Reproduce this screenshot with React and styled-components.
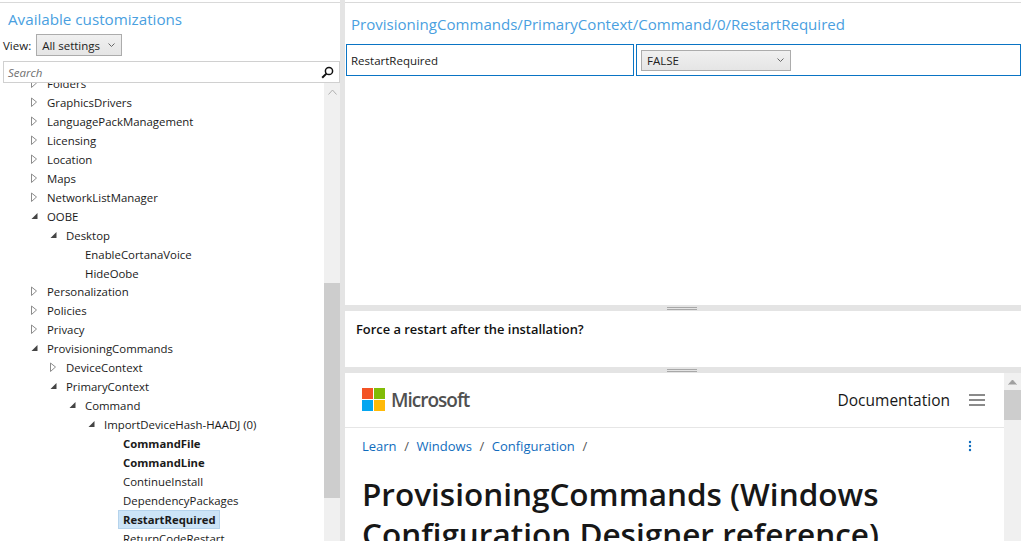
import styled, { createGlobalStyle } from "styled-components";

const Global = createGlobalStyle`
  html, body { margin: 0; padding: 0; background: #fff; }
  body { font-family: "Open Sans", "Noto Sans", "Liberation Sans", sans-serif; color: #1a1a1a; }
  * { box-sizing: border-box; }
`;

const Shell = styled.div`
  width: 1021px;
  height: 541px;
  display: flex;
  overflow: hidden;
  background: #fff;
`;

const LeftPane = styled.aside`
  width: 340px;
  flex: none;
  display: flex;
  flex-direction: column;
  padding-top: 2px;
`;

const TopRule = styled.div`
  height: 1px;
  flex: none;
  background: #d9d9d9;
`;

const PaneTitle = styled.h2`
  margin: 6px 0 0 8px;
  height: 21px;
  font-size: 15.2px;
  line-height: 21px;
  font-weight: 400;
  color: #4a9fdf;
`;

const ViewRow = styled.div`
  display: flex;
  align-items: center;
  gap: 5px;
  height: 22px;
  margin: 4px 0 0 3px;
  font-size: 11.5px;
`;

const Dropdown = styled.div`
  display: flex;
  align-items: center;
  justify-content: space-between;
  width: ${(p) => p.$width}px;
  height: ${(p) => p.$height}px;
  padding: 0 5px 0 5px;
  border: 1px solid #acacac;
  background: linear-gradient(#f0f0f0, #e5e5e5);
  font-size: 11.5px;
  color: #222;
`;

const SearchBox = styled.div`
  display: flex;
  align-items: center;
  justify-content: space-between;
  height: 22px;
  margin: 5px 0 0 3px;
  padding: 0 5px 0 4px;
  border: 1px solid #d0d0d0;
  font-size: 11.5px;
  font-style: italic;
  color: #707070;
`;

const TreeArea = styled.div`
  flex: 1;
  min-height: 0;
  display: flex;
`;

const TreeScroll = styled.div`
  flex: 1;
  overflow: hidden;
`;

const TreeList = styled.ul`
  list-style: none;
  margin: -9px 0 0;
  padding: 0;
`;

const Row = styled.li`
  position: relative;
  height: 18.96px;
  display: flex;
  align-items: center;
  padding-left: ${(p) => 47 + p.$level * 19}px;
  font-size: ${(p) => (p.$bold ? 11.3 : 11.4)}px;
  white-space: nowrap;
  font-weight: ${(p) => (p.$bold ? 700 : 400)};
`;

const Label = styled.span`
  padding: 0 3px 0 4px;
  margin-left: -4px;
  line-height: 17px;
  ${(p) =>
    p.$selected &&
    `
    background: #cce4f7;
    outline: 1px solid #b5d3ec;
  `}
`;

const Arrow = styled.svg`
  position: absolute;
  left: ${(p) => 30 + p.$level * 19}px;
  top: 4px;
`;

const Scrollbar = styled.div`
  width: ${(p) => p.$width}px;
  flex: none;
  display: flex;
  flex-direction: column;
  background: #f0f0f0;
`;

const ScrollCap = styled.div`
  height: 17px;
  flex: none;
  display: flex;
  align-items: center;
  justify-content: center;
`;

const ScrollGap = styled.div`
  flex: none;
  height: ${(p) => p.$height}px;
`;

const ScrollThumb = styled.div`
  flex: none;
  height: ${(p) => p.$height}px;
  background: #cdcdcd;
`;

const VSplitter = styled.div`
  width: 5px;
  flex: none;
  background: #e4e4e4;
`;

const RightPane = styled.main`
  flex: 1;
  min-width: 0;
  display: flex;
  flex-direction: column;
  padding-top: 2px;
`;

const PathHeading = styled.h1`
  margin: 11px 0 0 6px;
  height: 21px;
  font-size: 15.05px;
  line-height: 21px;
  font-weight: 400;
  color: #4a9fdf;
  white-space: nowrap;
`;

const SettingRow = styled.div`
  display: flex;
  gap: 2px;
  height: 32px;
  margin: 9px 0 0 1px;
`;

const SettingCell = styled.div`
  display: flex;
  align-items: center;
  border: 1px solid #0a74c4;
  padding-left: 4px;
  font-size: 11.5px;
  flex: ${(p) => (p.$grow ? 1 : "none")};
  width: ${(p) => (p.$grow ? "auto" : "288px")};
`;

const SettingsBody = styled.div`
  flex: 1;
`;

const HSplitter = styled.div`
  height: 6px;
  flex: none;
  display: flex;
  justify-content: center;
  align-items: center;
  background: #e4e4e4;
`;

const Grip = styled.div`
  width: 30px;
  height: 3px;
  margin-right: 2px;
  border-top: 1px solid #a8a8a8;
  border-bottom: 1px solid #a8a8a8;
`;

const Description = styled.div`
  height: 56px;
  flex: none;
  padding: 10px 0 0 11px;
  font-size: 12.9px;
  line-height: 17px;
  font-weight: 600;
  color: #111;
`;

const WebView = styled.div`
  height: 168px;
  flex: none;
  display: flex;
`;

const WebPage = styled.div`
  flex: 1;
  min-width: 0;
  overflow: hidden;
`;

const SiteHeader = styled.header`
  height: 55px;
  display: flex;
  align-items: center;
  justify-content: space-between;
  padding: 0 19px 1px 17px;
  border-bottom: 1px solid #e6e6e6;
`;

const Brand = styled.div`
  display: flex;
  align-items: center;
  gap: 6px;
  font-size: 19px;
  font-weight: 600;
  letter-spacing: -1px;
  color: #505050;
`;

const HeaderRight = styled.div`
  display: flex;
  align-items: center;
  gap: 19px;
  font-size: 15.5px;
  font-weight: 500;
  color: #171717;
`;

const Breadcrumbs = styled.nav`
  display: flex;
  align-items: center;
  justify-content: space-between;
  height: 36px;
  padding: 0 32px 0 17px;
  font-size: 13px;
`;

const Crumbs = styled.div`
  display: flex;
  gap: 7.6px;
  color: #555;
`;

const Crumb = styled.span`
  color: #0f6cbd;
`;

const Article = styled.h1`
  margin: 10px 0 0 17px;
  width: 580px;
  font-size: 31.5px;
  line-height: 40px;
  font-weight: 600;
  color: #171717;
`;

const rows = [
  { t: "Folders", l: 0, a: "c" },
  { t: "GraphicsDrivers", l: 0, a: "c" },
  { t: "LanguagePackManagement", l: 0, a: "c" },
  { t: "Licensing", l: 0, a: "c" },
  { t: "Location", l: 0, a: "c" },
  { t: "Maps", l: 0, a: "c" },
  { t: "NetworkListManager", l: 0, a: "c" },
  { t: "OOBE", l: 0, a: "e" },
  { t: "Desktop", l: 1, a: "e" },
  { t: "EnableCortanaVoice", l: 2 },
  { t: "HideOobe", l: 2 },
  { t: "Personalization", l: 0, a: "c" },
  { t: "Policies", l: 0, a: "c" },
  { t: "Privacy", l: 0, a: "c" },
  { t: "ProvisioningCommands", l: 0, a: "e" },
  { t: "DeviceContext", l: 1, a: "c" },
  { t: "PrimaryContext", l: 1, a: "e" },
  { t: "Command", l: 2, a: "e" },
  { t: "ImportDeviceHash-HAADJ (0)", l: 3, a: "e" },
  { t: "CommandFile", l: 4, bold: true },
  { t: "CommandLine", l: 4, bold: true },
  { t: "ContinueInstall", l: 4 },
  { t: "DependencyPackages", l: 4 },
  { t: "RestartRequired", l: 4, bold: true, selected: true },
  { t: "ReturnCodeRestart", l: 4 },
];

const TreeArrow = ({ kind, level }) => (
  <Arrow $level={level} width="10" height="11" viewBox="0 0 10 11">
    {kind === "c" ? (
      <path d="M1.5 1 L6.5 5 L1.5 9.5 Z" fill="#fff" stroke="#8c8c8c" />
    ) : (
      <path d="M7.5 2 V8 H1.5 Z" fill="#444" />
    )}
  </Arrow>
);

const Chevron = () => (
  <svg width="9" height="6" viewBox="0 0 9 6">
    <path d="M1.5 1.5 L4.5 4.5 L7.5 1.5" fill="none" stroke="#666" strokeWidth="1" />
  </svg>
);

const MsLogo = () => (
  <svg width="23" height="23" viewBox="0 0 23 23">
    <rect width="11" height="11" fill="#f35325" />
    <rect x="12" width="11" height="11" fill="#81bc06" />
    <rect y="12" width="11" height="11" fill="#05a6f0" />
    <rect x="12" y="12" width="11" height="11" fill="#ffba08" />
  </svg>
);

const Burger = () => (
  <svg width="16" height="12" viewBox="0 0 16 12">
    <path d="M0 1 H16 M0 6 H16 M0 11 H16" stroke="#171717" strokeWidth="1" />
  </svg>
);

const Kebab = () => (
  <svg width="4" height="12" viewBox="0 0 4 12">
    <circle cx="2" cy="2" r="1.2" fill="#0f6cbd" />
    <circle cx="2" cy="6" r="1.2" fill="#0f6cbd" />
    <circle cx="2" cy="10" r="1.2" fill="#0f6cbd" />
  </svg>
);

const ScrollUp = ({ color }) => (
  <svg width="9" height="6" viewBox="0 0 9 6">
    <path d="M0.5 5.5 L4.5 1 L8.5 5.5" fill={color ? color : "none"} stroke={color || "#b0b0b0"} />
  </svg>
);

export default function App() {
  return (
    <>
      <Global />
      <Shell>
        <LeftPane>
          <TopRule />
          <PaneTitle>Available customizations</PaneTitle>
          <ViewRow>
            View:
            <Dropdown $width={86} $height={22}>
              All settings
              <Chevron />
            </Dropdown>
          </ViewRow>
          <SearchBox>
            Search
            <svg width="13" height="13" viewBox="0 0 13 13">
              <circle cx="8" cy="5" r="3.6" fill="none" stroke="#111" strokeWidth="1.5" />
              <path d="M5.4 7.6 L1.2 11.8" stroke="#111" strokeWidth="2" />
            </svg>
          </SearchBox>
          <TreeArea>
            <TreeScroll>
              <TreeList>
                {rows.map((r) => (
                  <Row key={r.t} $level={r.l} $bold={r.bold}>
                    {r.a && <TreeArrow kind={r.a} level={r.l} />}
                    <Label $selected={r.selected}>{r.t}</Label>
                  </Row>
                ))}
              </TreeList>
            </TreeScroll>
            <Scrollbar $width={16}>
              <ScrollCap>
                <ScrollUp />
              </ScrollCap>
              <ScrollGap $height={183} />
              <ScrollThumb $height={215} />
            </Scrollbar>
          </TreeArea>
        </LeftPane>
        <VSplitter />
        <RightPane>
          <TopRule />
          <PathHeading>ProvisioningCommands/PrimaryContext/Command/0/RestartRequired</PathHeading>
          <SettingRow>
            <SettingCell>RestartRequired</SettingCell>
            <SettingCell $grow>
              <Dropdown $width={150} $height={21}>
                FALSE
                <Chevron />
              </Dropdown>
            </SettingCell>
          </SettingRow>
          <SettingsBody />
          <HSplitter>
            <Grip />
          </HSplitter>
          <Description>Force a restart after the installation?</Description>
          <HSplitter>
            <Grip />
          </HSplitter>
          <WebView>
            <WebPage>
              <SiteHeader>
                <Brand>
                  <MsLogo />
                  Microsoft
                </Brand>
                <HeaderRight>
                  Documentation
                  <Burger />
                </HeaderRight>
              </SiteHeader>
              <Breadcrumbs>
                <Crumbs>
                  <Crumb>Learn</Crumb>/<Crumb>Windows</Crumb>/<Crumb>Configuration</Crumb>/
                </Crumbs>
                <Kebab />
              </Breadcrumbs>
              <Article>ProvisioningCommands (Windows Configuration Designer reference)</Article>
            </WebPage>
            <Scrollbar $width={17}>
              <ScrollCap>
                <ScrollUp color="#a0a0a0" />
              </ScrollCap>
              <ScrollThumb $height={30} />
            </Scrollbar>
          </WebView>
        </RightPane>
      </Shell>
    </>
  );
}
